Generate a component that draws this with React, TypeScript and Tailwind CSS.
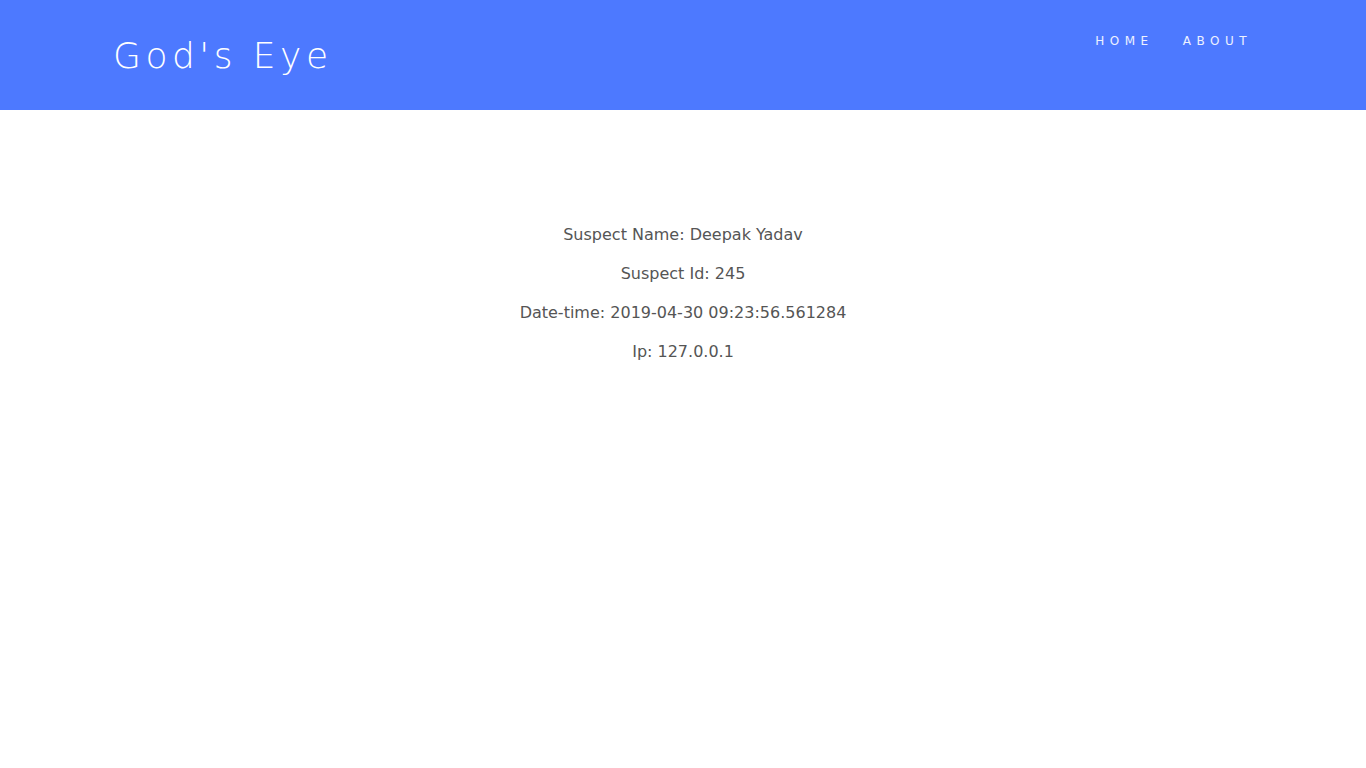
export default function App() {
  const rows = [
    "Suspect Name: Deepak Yadav",
    "Suspect Id: 245",
    "Date-time: 2019-04-30 09:23:56.561284",
    "Ip: 127.0.0.1",
  ];

  return (
    <div className="min-h-[768px] bg-white font-['DejaVu_Sans',sans-serif]">
      <header className="flex h-[110px] items-start justify-between bg-[#4d79ff] pl-[113px] pr-[114px]">
        <h1 className="mt-[34px] text-[36px] font-light leading-[44px] tracking-[4.5px] text-white">
          God's Eye
        </h1>
        <nav className="mt-[32px] flex gap-[29px] text-[12px] tracking-[5.5px] text-white/90">
          <a href="#">HOME</a>
          <a href="#">ABOUT</a>
        </nav>
      </header>

      <main className="flex flex-col items-center gap-[16px] pt-[113px] text-[16px] leading-[23px] text-[#555]">
        {rows.map((r) => (
          <p key={r}>{r}</p>
        ))}
      </main>
    </div>
  );
}
